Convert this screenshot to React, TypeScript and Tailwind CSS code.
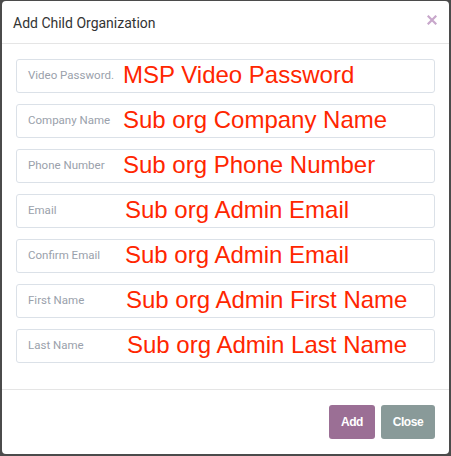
const fields = [
  { label: "Video Password.", note: "MSP Video Password", left: "left-[106px]" },
  { label: "Company Name", note: "Sub org Company Name", left: "left-[106px]" },
  { label: "Phone Number", note: "Sub org Phone Number", left: "left-[106px]" },
  { label: "Email", note: "Sub org Admin Email", left: "left-[108px]" },
  { label: "Confirm Email", note: "Sub org Admin Email", left: "left-[108px]" },
  { label: "First Name", note: "Sub org Admin First Name", left: "left-[109px]" },
  { label: "Last Name", note: "Sub org Admin Last Name", left: "left-[110px]" },
];

export default function App() {
  return (
    <div className="w-[451px] h-[456px] bg-[#4b4b4b] pt-[1px] pl-[2px] pr-[2px] pb-[2px]">
      <div className="h-full bg-white rounded-[4px] flex flex-col font-['Roboto',sans-serif]">
        {/* header */}
        <div className="h-[43px] shrink-0 border-b border-[#e5e5e5] flex items-center justify-between pl-[11px] pr-[11px]">
          <h4 className="text-[14px] text-[#333] leading-none mt-[1px]">Add Child Organization</h4>
          <svg width="10" height="10" viewBox="0 0 10 10" className="-mt-[4px] mr-[1px]">
            <path d="M1.5 1.5 L8.5 8.5 M8.5 1.5 L1.5 8.5" stroke="#c8a7cb" strokeWidth="2.2" strokeLinecap="square" />
          </svg>
        </div>

        {/* body */}
        <div className="flex-1 px-[14px] pt-[15px] flex flex-col gap-[11px]">
          {fields.map((f) => (
            <div
              key={f.label}
              className="relative h-[34px] border border-[#dbe1e8] rounded-[3px] flex items-center pl-[11px]"
            >
              <span className="text-[11.5px] text-[#9aa1ab]">{f.label}</span>
              <span
                className={`absolute top-[1px] ${f.left} text-[24px] leading-[27px] text-[#ff2600] font-['Liberation_Sans',Arial,sans-serif] whitespace-nowrap`}
              >
                {f.note}
              </span>
            </div>
          ))}
        </div>

        {/* footer */}
        <div className="h-[65px] shrink-0 border-t border-[#e5e5e5] flex justify-end items-start gap-[6px] pt-[15px] pr-[14px]">
          <button className="w-[46px] h-[34px] rounded-[3px] bg-[#9b6f95] text-white text-[12px] font-bold tracking-[-0.4px] font-['Liberation_Sans',Arial,sans-serif]">
            Add
          </button>
          <button className="w-[54px] h-[34px] rounded-[3px] bg-[#899a99] text-white text-[12px] font-bold tracking-[-0.4px] font-['Liberation_Sans',Arial,sans-serif]">
            Close
          </button>
        </div>
      </div>
    </div>
  );
}
